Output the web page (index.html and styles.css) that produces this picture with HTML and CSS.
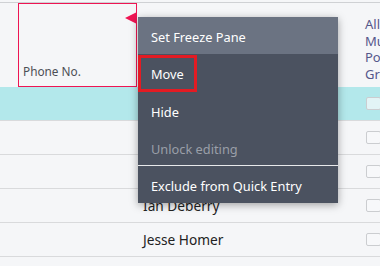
FILE: index.html
```html
<!DOCTYPE html>
<html>
<head>
<meta charset="utf-8">
<link rel="stylesheet" href="styles.css">
</head>
<body>
<div class="page">
  <div class="grid">
    <div class="row head">
      <div class="cell c0"></div>
      <div class="cell c1 selected"><span class="label">Phone No.</span><span class="marker"></span></div>
      <div class="cell c2"></div>
      <div class="cell c3 top"><span class="hdr">Allow<br>Multiple<br>Posting<br>Groups</span></div>
    </div>
    <div class="row active">
      <div class="cell c0"></div>
      <div class="cell c1"></div>
      <div class="cell c2"></div>
      <div class="cell c3"><span class="box"></span></div>
    </div>
    <div class="row">
      <div class="cell c0"></div>
      <div class="cell c1"></div>
      <div class="cell c2"></div>
      <div class="cell c3"><span class="box"></span></div>
    </div>
    <div class="row">
      <div class="cell c0"></div>
      <div class="cell c1"></div>
      <div class="cell c2"></div>
      <div class="cell c3"><span class="box"></span></div>
    </div>
    <div class="row">
      <div class="cell c0"></div>
      <div class="cell c1"></div>
      <div class="cell c2 name">Ian Deberry</div>
      <div class="cell c3"><span class="box"></span></div>
    </div>
    <div class="row">
      <div class="cell c0"></div>
      <div class="cell c1"></div>
      <div class="cell c2 name">Jesse Homer</div>
      <div class="cell c3"><span class="box"></span></div>
    </div>
    <div class="row"></div>
  </div>
  <div class="menu">
    <div class="item title">Set Freeze Pane</div>
    <div class="item focus">Move</div>
    <div class="item">Hide</div>
    <div class="item disabled">Unlock editing</div>
    <div class="sep"></div>
    <div class="item">Exclude from Quick Entry</div>
  </div>
</div>
</body>
</html>
```
FILE: styles.css
```css
* { box-sizing: border-box; }
html, body { margin: 0; padding: 0; }
body {
  width: 380px;
  height: 266px;
  overflow: hidden;
  background: #f5f6f8;
  font-family: "Noto Sans", "Open Sans", sans-serif;
}
.page {
  position: relative;
  width: 380px;
  height: 266px;
  overflow: hidden;
  padding-top: 2px;
}
.grid {
  border-top: 1px solid #cfd1d4;
}
.row {
  display: grid;
  grid-template-columns: 18px 119px 223px 20px;
  height: 34px;
  border-bottom: 1px solid #d9dadc;
}
.row.head {
  height: 84px;
  border-bottom: none;
}
.row.active {
  background: #b3e8eb;
}
.cell { position: relative; min-width: 0; }
.c1.selected {
  border: 1px solid #ee1553;
  display: flex;
  align-items: flex-end;
  padding: 0 0 7px 4px;
}
.label {
  font-size: 11.8px;
  color: #4c4f55;
}
.marker {
  position: absolute;
  right: -1px;
  top: 8px;
  width: 0;
  height: 0;
  border-top: 6px solid transparent;
  border-bottom: 6px solid transparent;
  border-right: 12px solid #ee1553;
}
.c3 {
  display: flex;
  align-items: center;
  padding-left: 6px;
  overflow: hidden;
}
.c3.top {
  align-items: flex-start;
  padding-left: 5px;
}
.hdr {
  display: block;
  padding-top: 13px;
  font-size: 13px;
  line-height: 16.5px;
  color: #55578a;
  white-space: nowrap;
}
.box {
  display: block;
  flex: none;
  width: 15px;
  height: 13px;
  border: 1px solid #cbcdd0;
  border-radius: 2px;
  background: #f7f8fa;
}
.active .box { background: #e2f4f6; }
.name {
  display: flex;
  align-items: center;
  padding-left: 6px;
  font-size: 13.7px;
  color: #222;
}
.menu {
  position: absolute;
  left: 138px;
  top: 17px;
  width: 200px;
  background: #4b5260;
  box-shadow: 0 2px 8px rgba(0, 0, 0, 0.35);
  font-size: 12.8px;
  color: #fff;
}
.item {
  height: 37px;
  display: flex;
  align-items: center;
  padding: 2px 0 0 13px;
}
.item.title { background: #6b7382; }
.item.focus {
  height: 37px;
  width: 59px;
  margin: 1px 0 0 0;
  border: 3px solid #e31b23;
  padding: 1px 0 0 10px;
}
.item.disabled { color: #9a9fa8; }
.sep {
  height: 1px;
  margin-top: -1px;
  background: #e8e9eb;
}
```
